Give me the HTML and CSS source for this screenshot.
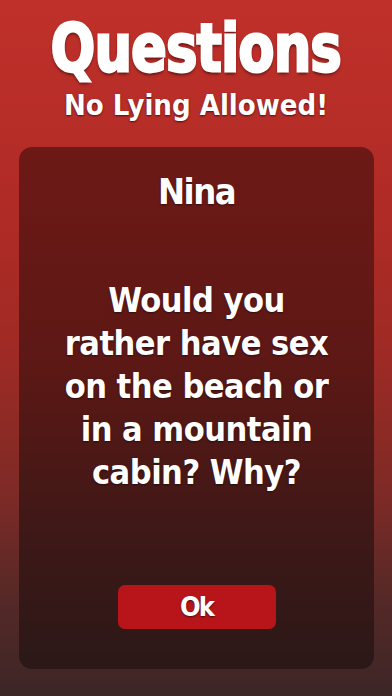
FILE: index.html
```html
<!DOCTYPE html>
<html lang="en">
<head>
<meta charset="utf-8">
<title>Questions</title>
<link rel="stylesheet" href="styles.css">
</head>
<body>
<div class="screen">
  <header class="header">
    <h1 class="title">Questions</h1>
    <p class="subtitle">No Lying Allowed!</p>
  </header>
  <main class="card">
    <h2 class="player">Nina</h2>
    <p class="question">Would you<br>rather have sex<br>on the beach or<br>in a mountain<br>cabin? Why?</p>
    <div class="actions">
      <button class="ok-btn" type="button">Ok</button>
    </div>
  </main>
</div>
</body>
</html>
```
FILE: styles.css
```css
html, body {
  margin: 0;
  padding: 0;
}
body {
  width: 392px;
  height: 696px;
  overflow: hidden;
  font-family: "DejaVu Sans Condensed", "DejaVu Sans", sans-serif;
  font-stretch: condensed;
  color: #fff;
}
.screen {
  width: 392px;
  height: 696px;
  display: flex;
  flex-direction: column;
  background: linear-gradient(180deg, #c0302a 0%, #b02b26 30%, #a02a25 50%, #7c2a26 72%, #552927 86%, #3c2626 100%);
}
.header {
  display: flex;
  flex-direction: column;
  align-items: center;
  padding-top: 18px;
  height: 147px;
  flex: none;
  box-sizing: border-box;
}
.title {
  margin: 0;
  font-size: 58px;
  line-height: 62px;
  font-weight: 700;
  letter-spacing: -0.5px;
  transform: scaleY(1.12);
  -webkit-text-stroke: 2.5px #fff;
  text-shadow: 0 0 2px rgba(40,0,0,.9), 0 2px 3px rgba(40,0,0,.6);
}
.subtitle {
  margin: 7px 0 0;
  font-size: 29px;
  line-height: 36px;
  font-weight: 700;
  text-shadow: 0 1px 2px rgba(40,0,0,.7);
}
.card {
  margin: 0 18px 0 19px;
  height: 522px;
  flex: none;
  box-sizing: border-box;
  border-radius: 13px;
  background: linear-gradient(180deg, #6d1916 0%, #5e1815 40%, #3d1817 75%, #2b1818 100%);
  display: flex;
  flex-direction: column;
  align-items: center;
  padding-bottom: 40px;
}
.player {
  margin: 20px 0 0;
  font-size: 36px;
  line-height: 50px;
  font-weight: 700;
  letter-spacing: -1.5px;
  text-shadow: 0 1px 2px rgba(0,0,0,.5);
}
.question {
  margin: 62px 0 0;
  text-align: center;
  font-size: 34px;
  line-height: 43px;
  font-weight: 700;
  letter-spacing: -0.5px;
  text-shadow: 0 1px 2px rgba(0,0,0,.5);
}
.actions {
  margin-top: auto;
}
.ok-btn {
  display: block;
  width: 158px;
  height: 44px;
  border: 0;
  border-radius: 7px;
  background: #b8151a;
  color: #fff;
  font-family: inherit;
  font-stretch: condensed;
  font-size: 27px;
  font-weight: 700;
  letter-spacing: -2px;
  line-height: 44px;
  padding: 0;
  text-shadow: 0 1px 2px rgba(0,0,0,.6);
}
```
